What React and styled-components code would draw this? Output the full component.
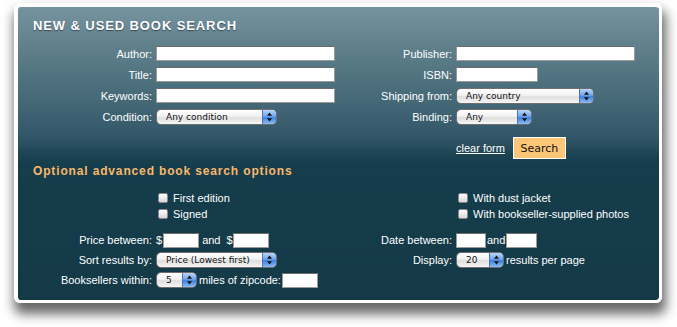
import React from "react"
import styled, { createGlobalStyle } from "styled-components"

const GlobalStyle = createGlobalStyle`
	html, body {
		margin: 0;
		background: #fff;
		font-family: "Liberation Sans", Arial, sans-serif;
	}
`

const Arrows = () => (
	<svg width="7" height="10" viewBox="0 0 7 10">
		<polygon points="3.5,0.5 6,3.8 1,3.8" fill="#111" />
		<polygon points="3.5,9.5 6,6.2 1,6.2" fill="#111" />
	</svg>
)

const Select = ({ width, value }) => (
	<SelectBox $width={width}>
		<SelectText>{value}</SelectText>
		<Stepper>
			<Arrows />
		</Stepper>
	</SelectBox>
)

const Check = ({ children }) => (
	<CheckRow>
		<CheckBox />
		{children}
	</CheckRow>
)

const App = () => {
	return (
		<Page>
			<GlobalStyle />
			<Panel>
				<Title>NEW &amp; USED BOOK SEARCH</Title>
				<FieldGrid $gap={6} $row={15}>
					<Label>Author:</Label>
					<Field><TextInput $width={179} /></Field>
					<Label>Publisher:</Label>
					<Field><TextInput $width={179} /></Field>

					<Label>Title:</Label>
					<Field><TextInput $width={179} /></Field>
					<Label>ISBN:</Label>
					<Field><TextInput $width={82} /></Field>

					<Label>Keywords:</Label>
					<Field><TextInput $width={179} /></Field>
					<Label>Shipping from:</Label>
					<Field><Select width={138} value="Any country" /></Field>

					<Label>Condition:</Label>
					<Field><Select width={121} value="Any condition" /></Field>
					<Label>Binding:</Label>
					<Field><Select width={76} value="Any" /></Field>
				</FieldGrid>

				<ActionRow>
					<ClearLink href="#">clear form</ClearLink>
					<SearchButton>Search</SearchButton>
				</ActionRow>

				<AdvancedTitle>Optional advanced book search options</AdvancedTitle>

				<FieldGrid $gap={0} $row={16} $top={11}>
					<span />
					<Check>First edition</Check>
					<span />
					<Check>With dust jacket</Check>
					<span />
					<Check>Signed</Check>
					<span />
					<Check>With bookseller-supplied photos</Check>
				</FieldGrid>

				<FieldGrid $gap={4} $row={16} $top={10}>
					<Label>Price between:</Label>
					<Field>
						<span>$</span>
						<TextInput $width={36} $left={1} />
						<Inline $left={3}>and</Inline>
						<Inline $left={6}>$</Inline>
						<TextInput $width={36} />
					</Field>
					<Label>Date between:</Label>
					<Field>
						<TextInput $width={30} />
						<Inline $left={1}>and</Inline>
						<TextInput $width={31} $left={1} />
					</Field>

					<Label>Sort results by:</Label>
					<Field><Select width={121} value="Price (Lowest first)" /></Field>
					<Label>Display:</Label>
					<Field>
						<Select width={48} value="20" />
						<Inline $left={2}>results per page</Inline>
					</Field>

					<Label>Booksellers within:</Label>
					<Field>
						<Select width={41} value="5" />
						<Inline $left={2}>miles of zipcode:</Inline>
						<TextInput $width={36} $left={1} />
					</Field>
					<span />
					<span />
				</FieldGrid>
			</Panel>
		</Page>
	)
}

const Page = styled.div`
	box-sizing: border-box;
	min-height: 327px;
	padding: 3px 15px 0 14px;
`

const Panel = styled.div`
	box-sizing: border-box;
	width: 648px;
	height: 300px;
	padding: 11px 0 12px;
	border-style: solid;
	border-color: #fff;
	border-width: 4px 3px 3px 4px;
	border-radius: 6px;
	background: linear-gradient(
		180deg,
		#7594a0 0px,
		#5f7f8b 40px,
		#476a78 90px,
		#34596a 125px,
		#2a4f5f 138px,
		#1b4352 148px,
		#163d4b 158px,
		#143a48 100%
	);
	background-clip: padding-box;
	box-shadow: 2px 9px 12px 2px rgba(0, 0, 0, 0.6);
`

const Title = styled.div`
	margin-left: 15px;
	font-size: 13px;
	line-height: 15px;
	font-weight: bold;
	letter-spacing: 0.9px;
	color: #fff;
	text-shadow: 0 1px 1px rgba(0, 0, 0, 0.45);
`

const FieldGrid = styled.div`
	display: grid;
	grid-template-columns: 134px 184px 108px 1fr;
	column-gap: 4px;
	row-gap: ${p => p.$gap}px;
	grid-auto-rows: ${p => p.$row}px;
	align-items: center;
	margin-top: ${p => (p.$top === undefined ? 13 : p.$top)}px;
`

const Label = styled.div`
	text-align: right;
	font-size: 11px;
	color: #fff;
	white-space: nowrap;
`

const Field = styled.div`
	display: flex;
	align-items: center;
	font-size: 11px;
	color: #fff;
	white-space: nowrap;
`

const Inline = styled.span`
	margin-left: ${p => p.$left || 0}px;
`

const TextInput = styled.input.attrs({ type: "text" })`
	box-sizing: border-box;
	width: ${p => p.$width}px;
	height: 15px;
	margin: 0 0 0 ${p => p.$left || 0}px;
	padding: 0;
	background: #fff;
	border: 1px solid #9a9a9a;
	border-top-color: #6b6b6b;
	border-radius: 0;
`

const SelectBox = styled.div`
	box-sizing: border-box;
	display: flex;
	width: ${p => p.$width}px;
	height: 16px;
	border: 1px solid #6f6f6f;
	border-radius: 5px;
	overflow: hidden;
	background: linear-gradient(180deg, #ffffff 0%, #f2f2f2 45%, #dedede 55%, #f6f6f6 100%);
`

const SelectText = styled.span`
	flex: 1;
	padding-left: 9px;
	font-family: "DejaVu Sans", "Liberation Sans", sans-serif;
	font-size: 9px;
	line-height: 14px;
	color: #111;
	overflow: hidden;
	white-space: nowrap;
`

const Stepper = styled.span`
	display: flex;
	align-items: center;
	justify-content: center;
	width: 13px;
	border-left: 1px solid #4c74b0;
	background: linear-gradient(180deg, #b9d5f7 0%, #6fa4ea 45%, #3f80e0 55%, #8cbdf2 100%);
`

const ActionRow = styled.div`
	display: flex;
	align-items: center;
	gap: 8px;
	margin-top: 13px;
	padding-left: 438px;
`

const ClearLink = styled.a`
	font-size: 11px;
	color: #fff;
	text-decoration: underline;
`

const SearchButton = styled.button`
	box-sizing: border-box;
	width: 53px;
	height: 22px;
	padding: 0;
	border: 1px solid #fff;
	background: #fec677;
	color: #111;
	font-family: "DejaVu Sans", "Liberation Sans", sans-serif;
	font-size: 11px;
`

const AdvancedTitle = styled.div`
	margin: 5px 0 0 15px;
	font-size: 12px;
	line-height: 15px;
	font-weight: bold;
	letter-spacing: 0.85px;
	color: #f8b76b;
`

const CheckRow = styled.label`
	display: flex;
	align-items: center;
	gap: 5px;
	padding-left: 2px;
	font-size: 11px;
	color: #fff;
	white-space: nowrap;
`

const CheckBox = styled.span`
	box-sizing: border-box;
	width: 10px;
	height: 10px;
	border: 1px solid #8a8a8a;
	border-radius: 2px;
	background: linear-gradient(180deg, #ffffff, #d8d8d8);
`

export default App
